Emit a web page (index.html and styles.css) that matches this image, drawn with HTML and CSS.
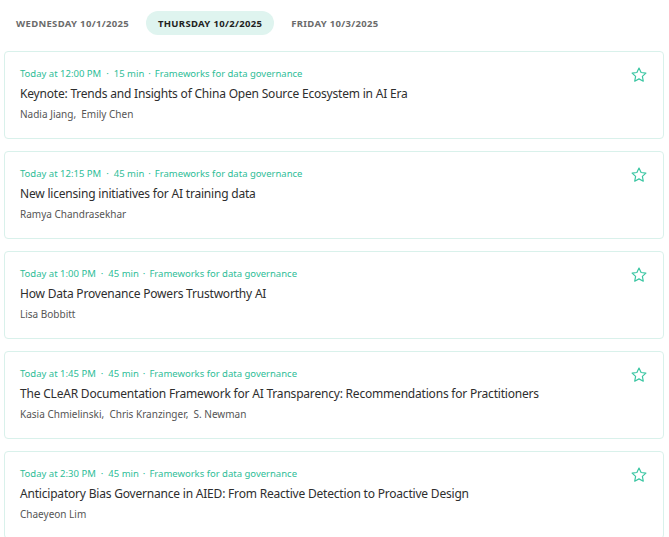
FILE: index.html
```html
<!DOCTYPE html>
<html>
<head>
<meta charset="utf-8">
<link rel="stylesheet" href="styles.css">
</head>
<body>
<nav class="tabs">
  <span class="tab">Wednesday 10/1/2025</span>
  <span class="tab active">Thursday 10/2/2025</span>
  <span class="tab">Friday 10/3/2025</span>
</nav>
<main class="list">
  <article class="card">
    <div class="info">
      <div class="meta"><span>Today at 12:00 PM</span><span class="dot">·</span><span>15 min</span><span class="dot dot2">·</span><span>Frameworks for data governance</span></div>
      <div class="title">Keynote: Trends and Insights of China Open Source Ecosystem in AI Era</div>
      <div class="authors">Nadia Jiang,&nbsp; Emily Chen</div>
    </div>
    <svg class="star" viewBox="0 0 24 24"><path d="M12 2.8l2.8 5.9 6.4.8-4.7 4.4 1.2 6.4L12 17.2l-5.7 3.1 1.2-6.4-4.7-4.4 6.4-.8z"/></svg>
  </article>
  <article class="card">
    <div class="info">
      <div class="meta"><span>Today at 12:15 PM</span><span class="dot">·</span><span>45 min</span><span class="dot dot2">·</span><span>Frameworks for data governance</span></div>
      <div class="title">New licensing initiatives for AI training data</div>
      <div class="authors">Ramya Chandrasekhar</div>
    </div>
    <svg class="star" viewBox="0 0 24 24"><path d="M12 2.8l2.8 5.9 6.4.8-4.7 4.4 1.2 6.4L12 17.2l-5.7 3.1 1.2-6.4-4.7-4.4 6.4-.8z"/></svg>
  </article>
  <article class="card">
    <div class="info">
      <div class="meta"><span>Today at 1:00 PM</span><span class="dot">·</span><span>45 min</span><span class="dot dot2">·</span><span>Frameworks for data governance</span></div>
      <div class="title">How Data Provenance Powers Trustworthy AI</div>
      <div class="authors">Lisa Bobbitt</div>
    </div>
    <svg class="star" viewBox="0 0 24 24"><path d="M12 2.8l2.8 5.9 6.4.8-4.7 4.4 1.2 6.4L12 17.2l-5.7 3.1 1.2-6.4-4.7-4.4 6.4-.8z"/></svg>
  </article>
  <article class="card">
    <div class="info">
      <div class="meta"><span>Today at 1:45 PM</span><span class="dot">·</span><span>45 min</span><span class="dot dot2">·</span><span>Frameworks for data governance</span></div>
      <div class="title">The CLeAR Documentation Framework for AI Transparency: Recommendations for Practitioners</div>
      <div class="authors">Kasia Chmielinski,&nbsp; Chris Kranzinger,&nbsp; S. Newman</div>
    </div>
    <svg class="star" viewBox="0 0 24 24"><path d="M12 2.8l2.8 5.9 6.4.8-4.7 4.4 1.2 6.4L12 17.2l-5.7 3.1 1.2-6.4-4.7-4.4 6.4-.8z"/></svg>
  </article>
  <article class="card">
    <div class="info">
      <div class="meta"><span>Today at 2:30 PM</span><span class="dot">·</span><span>45 min</span><span class="dot dot2">·</span><span>Frameworks for data governance</span></div>
      <div class="title">Anticipatory Bias Governance in AIED: From Reactive Detection to Proactive Design</div>
      <div class="authors">Chaeyeon Lim</div>
    </div>
    <svg class="star" viewBox="0 0 24 24"><path d="M12 2.8l2.8 5.9 6.4.8-4.7 4.4 1.2 6.4L12 17.2l-5.7 3.1 1.2-6.4-4.7-4.4 6.4-.8z"/></svg>
  </article>
</main>
</body>
</html>
```
FILE: styles.css
```css
* { box-sizing: border-box; }
html, body { margin: 0; padding: 0; background: #fff; }
body {
  font-family: "Noto Sans", "Open Sans", sans-serif;
  color: #333;
  padding: 11px 5px 0 4px;
  overflow: hidden;
}
.tabs {
  display: flex;
  gap: 5px;
  height: 24px;
  margin-bottom: 16px;
}
.tab {
  display: flex;
  align-items: center;
  padding: 0 12px;
  height: 24px;
  border-radius: 12px;
  font-size: 9.5px;
  font-weight: 700;
  text-transform: uppercase;
  color: #6b6b6b;
  letter-spacing: 0.32px;
}
.tab.active {
  background: #dff4ef;
  color: #222;
}
.list {
  display: flex;
  flex-direction: column;
  gap: 12px;
}
.card {
  display: flex;
  align-items: flex-start;
  justify-content: space-between;
  border: 1px solid #d9f1eb;
  border-radius: 4px;
  padding: 12px 15px 14px 15px;
  height: 88px;
}
.info { display: flex; flex-direction: column; }
.meta {
  font-size: 9.5px;
  line-height: 20px;
  color: #2ebd97;
  display: flex;
}
.dot { margin: 0 5px 0 5px; }
.dot2 { margin: 0 4px; }
.title {
  font-size: 12px;
  letter-spacing: -0.2px;
  line-height: 20px;
  color: #2e2e2e;
}
.authors {
  font-size: 10px;
  line-height: 20px;
  color: #555;
}
.star {
  width: 18px;
  height: 18px;
  margin-top: 2px;
  fill: none;
  stroke: #3cc6a3;
  stroke-width: 1.6;
  stroke-linejoin: round;
  flex: none;
}
```
